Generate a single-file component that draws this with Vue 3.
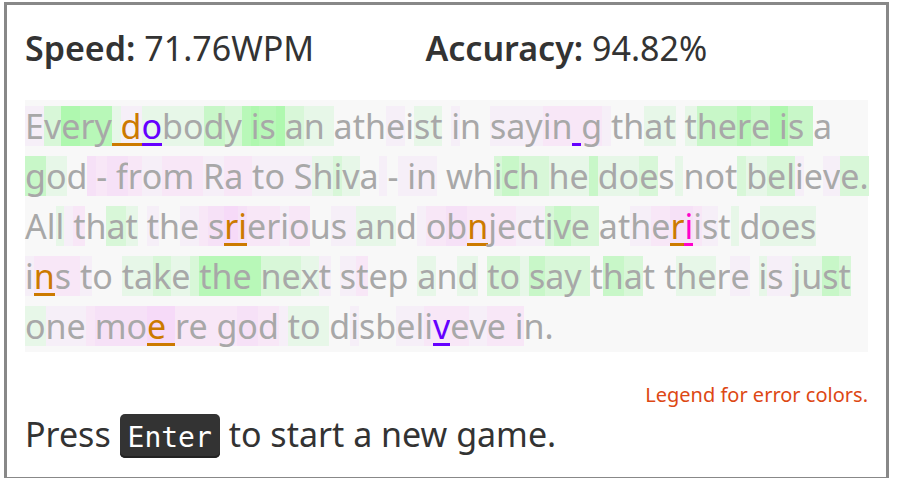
<script setup>
// Each run is [text, speed level, optional error kind].
// Speed levels: f1-f5 faster than average, s1-s4 slower than average.
const lines = [
  [
    ['E', 's1'], ['v', 'f2'], ['e', 'f5'], ['ry', 'f4'], [' ', 'f1', 'swap'], ['d', 's1', 'swap'],
    ['o', 'f1', 'extra'], ['bo', 'f1'], ['d', 'f3'], ['y', 'f2'], [' ', 'f4'], ['i', 'f5'], ['s', 'f4'],
    [' ', 'f5'], ['a', 'f2'], ['n ', 'f1'], ['ath', ''], ['e', 's1'], ['i', ''], ['st', 'f1'], [' ', ''],
    ['i', 's1'], ['n ', ''], ['say', 's1'], ['in', 's2'], [' ', 's2', 'extra'], ['g', 's2'], [' ', 's1'],
    ['th', ''], ['at', 'f1'], [' ', ''], ['t', 'f1'], ['he', 'f3'], ['r', 'f4'], ['e', 'f3'], [' i', 'f5'],
    ['s ', 'f3'], ['a', ''],
  ],
  [
    ['g', 'f3'], ['o', 'f1'], ['d', ''], [' ', 's3'], ['-', 's2'], [' f', 's3'], ['r', 's2'], ['o', 's1'],
    ['m ', 's2'], ['R', 's1'], ['a ', 's2'], ['to S', 's1'], ['h', 'f1'], ['i', 'f2'], ['v', 'f1'], ['a', ''],
    [' ', 's1'], ['-', ''], [' in', 's1'], [' wh', ''], ['i', 'f2'], ['c', 'f3'], ['h ', 'f2'], ['he', 'f1'],
    [' ', 'f3'], ['do', 'f1'], ['e', 'f2'], ['s', ''], [' ', 'f1'], ['not', ''], [' ', 'f2'], ['b', 'f1'],
    ['el', 'f2'], ['i', 's1'], ['e', ''], ['v', 's1'], ['e.', 'f2'],
  ],
  [
    ['Al', ''], ['l', 'f1'], [' ', 's1'], ['t', 's2'], ['h', ''], ['a', 'f2'], ['t', 'f1'], [' ', ''],
    ['t', 's1'], ['h', ''], ['e', 's1'], [' ', 's2'], ['s', 's3'], ['r', 's4', 'swap'], ['i', 's3', 'swap'],
    ['er', 's2'], ['i', 's1'], ['o', 's2'], ['u', ''], ['s ', 's1'], ['an', 'f1'], ['d', ''], [' ', 's1'],
    ['o', 's2'], ['b', 's3'], ['n', 's2', 'swap'], ['je', 's2'], ['ct', 's1'], ['i', 'f2'], ['v', 'f3'],
    ['e ', 'f2'], ['at', ''], ['h', 's1'], ['e', 's2'], ['r', 's3', 'swap'], ['i', 's3', 'wrong'],
    ['i', 's2'], ['s', 's1'], ['t', ''], [' ', 'f1'], ['d', ''], ['oes', 'f1'],
  ],
  [
    ['i', 's1'], ['n', 's2', 'swap'], ['s ', 's2'], ['t', 's1'], ['o ', ''], ['ta', 'f1'], ['k', 'f2'],
    ['e', 'f1'], [' ', 'f2'], ['the ', 'f4'], ['ne', 'f2'], ['x', 'f1'], ['t', 's1'], [' ', ''], ['s', 's1'],
    ['t', 's2'], ['ep ', ''], ['a', 'f1'], ['n', ''], ['d', 'f1'], [' ', ''], ['to', 'f2'], [' ', 'f1'],
    ['s', 'f3'], ['ay ', 'f2'], ['t', ''], ['h', 'f3'], ['a', 'f2'], ['t t', ''], ['he', 'f1'], ['r', ''],
    ['e', 's1'], [' ', ''], ['i', 'f1'], ['s ', 's1'], ['ju', 'f1'], ['s', 'f3'], ['t', 'f2'],
  ],
  [
    ['o', 'f1'], ['ne', 's1'], [' ', 's2'], ['mo', 's3'], ['e ', 's4', 'swap'], ['re g', 's2'], ['o', 's3'],
    ['d', 's2'], [' ', 's1'], ['to ', 'f1'], ['d', ''], ['i', 's1'], ['sb', ''], ['el', 's1'], ['i', 's2'],
    ['v', 's2', 'extra'], ['e', 's2'], ['v', 's1'], ['e i', 's2'], ['n.', ''],
  ],
]
</script>

<template>
  <main class="result">
    <div class="stats">
      <div><strong>Speed:</strong> 71.76WPM</div>
      <div><strong>Accuracy:</strong> 94.82%</div>
    </div>
    <div class="replay">
      <div v-for="(line, n) in lines" :key="n" class="line">
        <span v-for="(run, i) in line" :key="i" class="run" :class="[run[1], run[2]]">{{ run[0] }}</span>
      </div>
    </div>
    <div class="legend"><a href="#legend">Legend for error colors.</a></div>
    <p class="prompt">Press <kbd>Enter</kbd> to start a new game.</p>
  </main>
</template>

<style>
html {
  overflow: hidden;
}
body {
  background: #fff;
}
</style>

<style scoped>
.result {
  margin: 2px 10px 0 4px;
  padding: 18px;
  border: 3px solid #888;
  font-family: "Noto Sans", "Open Sans", sans-serif;
  font-size: 34px;
  line-height: 50px;
  color: #333;
}
.stats {
  display: grid;
  grid-template-columns: 19fr 21fr;
  margin-bottom: 27px;
  white-space: nowrap;
}
strong {
  font-weight: 600;
}
.replay {
  padding: 1px 0;
  background: #f8f8f8;
  color: #a8a8a8;
}
.line {
  display: flex;
  align-items: center;
  height: 50px;
}
.run {
  box-sizing: border-box;
  height: 40px;
  line-height: 40px;
  white-space: pre;
}
.f1 { background: #e7f7e8; }
.f2 { background: #d8f7d8; }
.f3 { background: #c8f7c8; }
.f4 { background: #b8f8b8; }
.f5 { background: #aff8af; }
.s1 { background: #f6eff8; }
.s2 { background: #f8e7f7; }
.s3 { background: #f6e1f7; }
.s4 { background: #f6daf8; }
.swap, .extra, .wrong {
  border-bottom: 3px solid currentColor;
}
.swap { color: #cc7a00; }
.extra { color: #6600ff; }
.wrong { color: #ff00cc; }
.legend {
  display: flex;
  justify-content: flex-end;
  margin-top: 28px;
  font-size: 20px;
  line-height: 29px;
}
.legend a {
  color: #dd4814;
  text-decoration: none;
}
.prompt {
  display: flex;
  align-items: baseline;
  height: 50px;
  margin: 0;
  white-space: pre;
}
kbd {
  padding: 3px 8px 0;
  border-radius: 5px;
  background: #333;
  box-shadow: inset 0 -2px 0 #222;
  color: #fff;
  font-family: "DejaVu Sans Mono", monospace;
  font-size: 28px;
  line-height: 41px;
}
</style>
